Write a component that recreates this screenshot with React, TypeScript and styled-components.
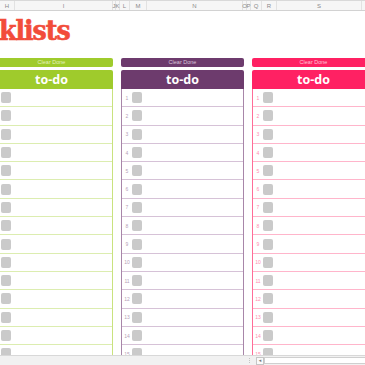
import React from "react";
import styled, { createGlobalStyle } from "styled-components";

type Tone = "green" | "purple" | "pink";

const palette: Record<
  Tone,
  { main: string; label: string; side: string; line: string; num: string }
> = {
  green: {
    main: "#9fcb2c",
    label: "#e3f1bd",
    side: "#c9e27e",
    line: "#dcedb0",
    num: "#b8d878",
  },
  purple: {
    main: "#6d3b6d",
    label: "#d9c5d9",
    side: "#a886a9",
    line: "#d6c2d7",
    num: "#b79fb8",
  },
  pink: {
    main: "#ff2163",
    label: "#ffc4d4",
    side: "#ff6d98",
    line: "#ffb5cb",
    num: "#ff8db0",
  },
};

const GlobalStyle = createGlobalStyle`
  html, body {
    margin: 0;
    padding: 0;
    background: #ffffff;
  }
  body {
    font-family: "DejaVu Sans", "Liberation Sans", sans-serif;
  }
`;

const Sheet = styled.div`
  width: 365px;
  height: 365px;
  display: flex;
  flex-direction: column;
  overflow: hidden;
  background: #ffffff;
`;

const ColumnBar = styled.div`
  height: 9px;
  flex: none;
  display: flex;
  background: #f6f6f6;
  border-top: 1px solid #d9d9d9;
  border-bottom: 1px solid #d2d2d2;
  overflow: hidden;
`;

const ColumnCell = styled.div<{ w: number }>`
  flex: none;
  width: ${({ w }) => w}px;
  display: flex;
  justify-content: center;
  align-items: center;
  border-right: 1px solid #e2e2e2;
  box-sizing: border-box;
  font-family: "Liberation Sans", sans-serif;
  font-size: 6px;
  color: #8a8a8a;
  overflow: visible;
  white-space: nowrap;
`;

const Body = styled.div`
  flex: 1;
  min-height: 0;
  overflow: hidden;
`;

const Title = styled.h1`
  margin: 0 0 0 -1px;
  height: 47px;
  padding-top: 3px;
  box-sizing: border-box;
  font-family: "DejaVu Serif", serif;
  font-stretch: condensed;
  font-weight: bold;
  font-size: 28px;
  line-height: 34px;
  letter-spacing: -1px;
  color: #f24c3a;
  -webkit-text-stroke: 0.6px #f24c3a;
`;

const Panels = styled.div`
  display: flex;
  gap: 8px;
  margin-left: -10px;
`;

const Panel = styled.section`
  flex: none;
  width: 123px;
  display: flex;
  flex-direction: column;
`;

const ClearButton = styled.div<{ tone: Tone }>`
  height: 9px;
  border-radius: 2px;
  background: ${({ tone }) => palette[tone].main};
  color: ${({ tone }) => palette[tone].label};
  font-family: "Liberation Sans", sans-serif;
  font-size: 5.5px;
  line-height: 9px;
  text-align: center;
`;

const Heading = styled.div<{ tone: Tone }>`
  margin-top: 3px;
  height: 19px;
  border-radius: 2px 2px 0 0;
  background: ${({ tone }) => palette[tone].main};
  color: #ffffff;
  font-family: "Open Sans", "Liberation Sans", sans-serif;
  font-weight: 700;
  font-size: 12.5px;
  line-height: 19px;
  text-align: center;
`;

const List = styled.div<{ tone: Tone }>`
  border-left: 1px solid ${({ tone }) => palette[tone].side};
  border-right: 1px solid ${({ tone }) => palette[tone].side};
`;

const Row = styled.div<{ tone: Tone }>`
  height: 18.3px;
  box-sizing: border-box;
  display: flex;
  align-items: center;
  border-bottom: 1px solid ${({ tone }) => palette[tone].line};
`;

const Num = styled.span<{ tone: Tone }>`
  width: 10px;
  flex: none;
  text-align: center;
  font-family: "Liberation Sans", sans-serif;
  font-size: 5px;
  color: ${({ tone }) => palette[tone].num};
`;

const Box = styled.span`
  width: 10px;
  height: 11px;
  flex: none;
  border-radius: 2px;
  background: #cacaca;
`;

const Footer = styled.div`
  height: 9px;
  flex: none;
  display: flex;
  align-items: center;
  background: #f1f1f1;
  border-top: 1px solid #d8d8d8;
`;

const Grip = styled.div`
  margin-left: 249px;
  width: 1px;
  height: 5px;
  border-left: 1px dotted #c4c4c4;
`;

const ArrowBox = styled.div`
  margin-left: 5px;
  width: 6px;
  height: 6px;
  border: 1px solid #c6c6c6;
  background: #fafafa;
  display: flex;
  align-items: center;
  justify-content: center;
  color: #777;
  font-size: 5px;
  line-height: 1;
`;

const Track = styled.div`
  flex: 1;
  height: 5px;
  background: #ffffff;
  border: 1px solid #cfcfcf;
  border-right: none;
`;

const columns: [string, number][] = [
  ["H", 15],
  ["I", 98],
  ["J", 3],
  ["K", 4],
  ["L", 10],
  ["M", 17],
  ["N", 96],
  ["O", 4],
  ["P", 4],
  ["Q", 11],
  ["R", 15],
  ["S", 85],
  ["T", 40],
];

const tones: Tone[] = ["green", "purple", "pink"];
const rows = Array.from({ length: 16 }, (_, i) => i + 1);

export default function App() {
  return (
    <>
      <GlobalStyle />
      <Sheet>
        <ColumnBar>
          {columns.map(([label, w]) => (
            <ColumnCell key={label} w={w}>
              {label}
            </ColumnCell>
          ))}
        </ColumnBar>
        <Body>
          <Title>klists</Title>
          <Panels>
            {tones.map((tone) => (
              <Panel key={tone}>
                <ClearButton tone={tone}>Clear Done</ClearButton>
                <Heading tone={tone}>to-do</Heading>
                <List tone={tone}>
                  {rows.map((n) => (
                    <Row key={n} tone={tone}>
                      <Num tone={tone}>{n}</Num>
                      <Box />
                    </Row>
                  ))}
                </List>
              </Panel>
            ))}
          </Panels>
        </Body>
        <Footer>
          <Grip />
          <ArrowBox>◂</ArrowBox>
          <Track />
        </Footer>
      </Sheet>
    </>
  );
}
